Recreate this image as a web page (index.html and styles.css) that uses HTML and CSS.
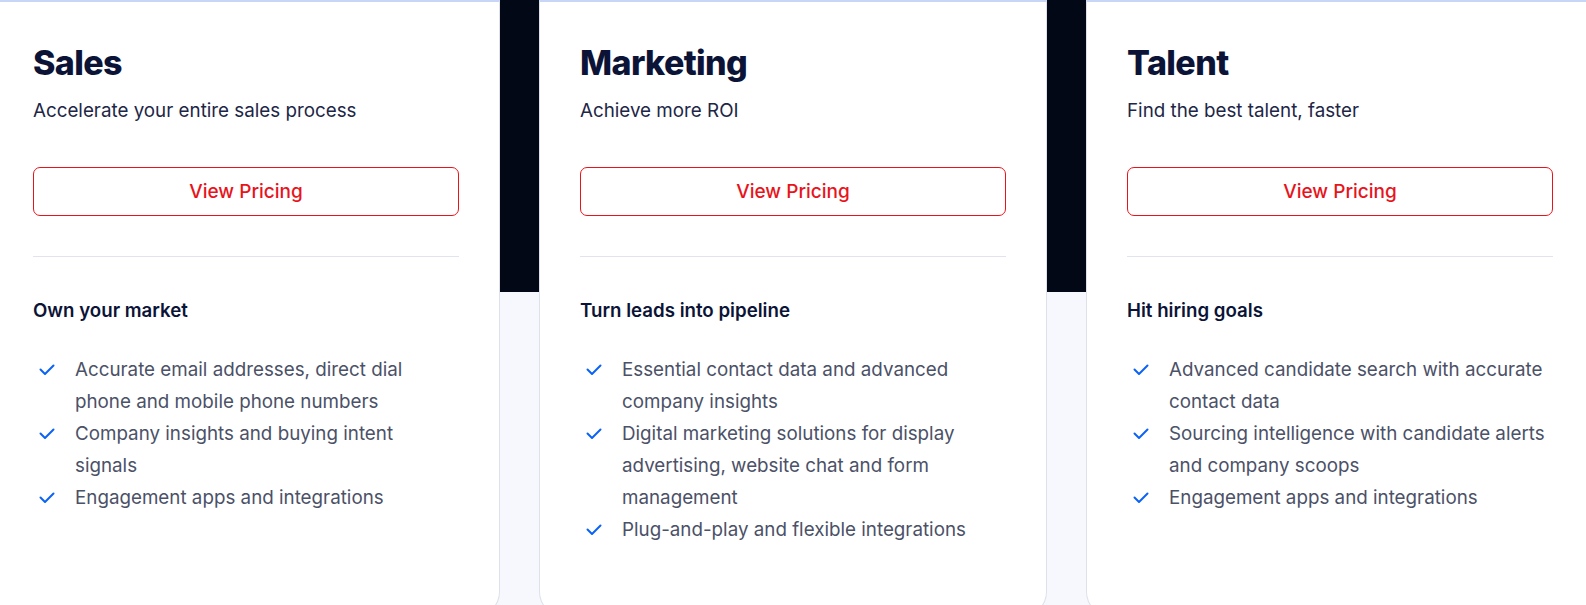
FILE: index.html
```html
<!DOCTYPE html>
<html lang="en">
<head>
<meta charset="utf-8">
<title>Pricing</title>
<link rel="stylesheet" href="styles.css">
</head>
<body>
<section class="plans">
  <div class="row">
    <article class="card">
      <h2 class="card-title">Sales</h2>
      <p class="card-sub">Accelerate your entire sales process</p>
      <a class="btn" href="#">View Pricing</a>
      <hr class="divider">
      <h3 class="feat-title">Own your market</h3>
      <ul class="feats">
        <li><svg class="check" viewBox="0 0 16 12" width="16" height="12"><polyline points="1.5,5.5 6,10 14.5,1.5"/></svg><span>Accurate email addresses, direct dial phone and mobile phone numbers</span></li>
        <li><svg class="check" viewBox="0 0 16 12" width="16" height="12"><polyline points="1.5,5.5 6,10 14.5,1.5"/></svg><span>Company insights and buying intent signals</span></li>
        <li><svg class="check" viewBox="0 0 16 12" width="16" height="12"><polyline points="1.5,5.5 6,10 14.5,1.5"/></svg><span>Engagement apps and integrations</span></li>
      </ul>
    </article>
    <article class="card">
      <h2 class="card-title">Marketing</h2>
      <p class="card-sub">Achieve more ROI</p>
      <a class="btn" href="#">View Pricing</a>
      <hr class="divider">
      <h3 class="feat-title">Turn leads into pipeline</h3>
      <ul class="feats">
        <li><svg class="check" viewBox="0 0 16 12" width="16" height="12"><polyline points="1.5,5.5 6,10 14.5,1.5"/></svg><span>Essential contact data and advanced company insights</span></li>
        <li><svg class="check" viewBox="0 0 16 12" width="16" height="12"><polyline points="1.5,5.5 6,10 14.5,1.5"/></svg><span>Digital marketing solutions for display advertising, website chat and form management</span></li>
        <li><svg class="check" viewBox="0 0 16 12" width="16" height="12"><polyline points="1.5,5.5 6,10 14.5,1.5"/></svg><span>Plug-and-play and flexible integrations</span></li>
      </ul>
    </article>
    <article class="card">
      <h2 class="card-title">Talent</h2>
      <p class="card-sub">Find the best talent, faster</p>
      <a class="btn" href="#">View Pricing</a>
      <hr class="divider">
      <h3 class="feat-title">Hit hiring goals</h3>
      <ul class="feats">
        <li><svg class="check" viewBox="0 0 16 12" width="16" height="12"><polyline points="1.5,5.5 6,10 14.5,1.5"/></svg><span>Advanced candidate search with accurate contact data</span></li>
        <li><svg class="check" viewBox="0 0 16 12" width="16" height="12"><polyline points="1.5,5.5 6,10 14.5,1.5"/></svg><span>Sourcing intelligence with candidate alerts and company scoops</span></li>
        <li><svg class="check" viewBox="0 0 16 12" width="16" height="12"><polyline points="1.5,5.5 6,10 14.5,1.5"/></svg><span>Engagement apps and integrations</span></li>
      </ul>
    </article>
  </div>
</section>
</body>
</html>
```
FILE: styles.css
```css
* { box-sizing: border-box; }
html, body { margin: 0; padding: 0; }
body {
  font-family: Inter, "Noto Sans", sans-serif;
  overflow: hidden;
  background: #f7f8fd;
}
.plans {
  height: 605px;
  overflow: hidden;
  background: linear-gradient(#030817 0, #030817 292px, #f7f8fd 292px);
}
.row {
  display: flex;
  gap: 39px;
  margin-left: -8px;
}
.card {
  flex: 0 0 508px;
  height: 616px;
  background: #fff;
  border: 1px solid #dde1ea;
  border-top: 2px solid #c7d6f7;
  border-radius: 0 0 24px 24px;
  padding: 41px 40px 0;
  display: flex;
  flex-direction: column;
}
.card-title {
  margin: 0;
  font-size: 34px;
  line-height: 40px;
  font-weight: 800;
  color: #0b1437;
  letter-spacing: -0.6px;
}
.card-sub {
  margin: 14px 0 0;
  font-size: 18.8px;
  line-height: 28px;
  color: #1d2646;
}
.btn {
  margin-top: 42px;
  height: 49px;
  border: 1px solid #e8141c;
  border-radius: 7px;
  display: flex;
  align-items: center;
  justify-content: center;
  color: #e8141c;
  font-size: 19px;
  font-weight: 500;
  text-decoration: none;
}
.divider {
  margin: 40px 0 0;
  border: 0;
  height: 1px;
  background: #e1e4ee;
}
.feat-title {
  margin: 40px 0 0;
  font-size: 18.7px;
  line-height: 28px;
  font-weight: 600;
  color: #0b1437;
}
.feats {
  list-style: none;
  margin: 29px 0 0;
  padding: 0;
}
.feats li {
  display: flex;
  padding-right: 3px;
  font-size: 18.8px;
  line-height: 32px;
  color: #4b5167;
}
.check {
  flex: 0 0 16px;
  margin: 10px 20px 0 6px;
  fill: none;
  stroke: #0b63f6;
  stroke-width: 2;
  stroke-linecap: round;
  stroke-linejoin: round;
}
.feats span { flex: 1; }
```
